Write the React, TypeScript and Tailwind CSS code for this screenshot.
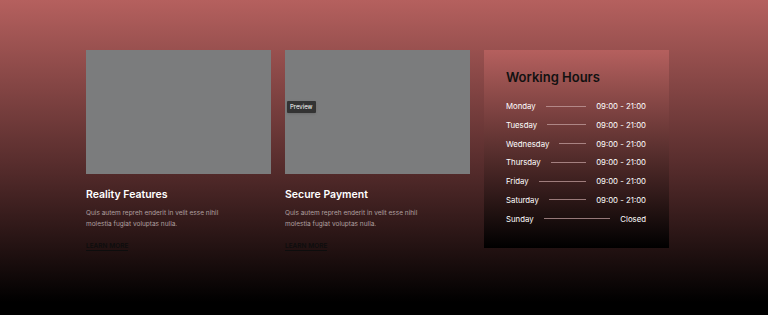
const features = [
  { title: "Reality Features", preview: false },
  { title: "Secure Payment", preview: true },
];

const hours = [
  { day: "Monday", time: "09:00 - 21:00" },
  { day: "Tuesday", time: "09:00 - 21:00" },
  { day: "Wednesday", time: "09:00 - 21:00" },
  { day: "Thursday", time: "09:00 - 21:00" },
  { day: "Friday", time: "09:00 - 21:00" },
  { day: "Saturday", time: "09:00 - 21:00" },
  { day: "Sunday", time: "Closed" },
];

export default function App() {
  return (
    <div
      className="w-[768px] h-[315px] bg-linear-to-b/srgb from-[#b5605e] via-[#522a2a] via-[55%] to-black to-[96%] pt-[50px] pl-[86px]"
      style={{ fontFamily: "Inter, 'Noto Sans', sans-serif" }}
    >
      <div className="flex gap-[14px]">
        {features.map((f) => (
          <div key={f.title} className="w-[185px]">
            <div className="relative h-[124px] bg-[#7b7c7d]">
              {f.preview && (
                <span className="absolute left-[2px] top-[51px] bg-[#333] text-white text-[6px] leading-none px-[3px] py-[3px] rounded-[1px] shadow">
                  Preview
                </span>
              )}
            </div>
            <h3 className="mt-[16px] text-[10.5px] font-semibold text-white leading-none">{f.title}</h3>
            <p className="mt-[7px] text-[6.5px] leading-[11px] text-[#b0a0a0] w-[150px]">
              Quis autem repreh enderit in velit esse nihil molestia fugiat voluptas nulla.
            </p>
            <a className="inline-block mt-[8px] text-[6.5px] font-semibold text-[#0d0d0d] uppercase border-b border-[#0d0d0d] pb-[1px] leading-none">
              Learn More
            </a>
          </div>
        ))}
        <div className="w-[185px] h-[198px] bg-linear-to-b/srgb from-[#b5605e] to-black pl-[22px] pr-[23px] pt-[21px]">
          <h3 className="text-[13px] font-semibold text-[#111] leading-none">Working Hours</h3>
          <ul className="mt-[17px] flex flex-col gap-[8.8px]">
            {hours.map((h) => (
              <li key={h.day} className="flex items-center text-[7.8px] text-white leading-[10px]">
                <span>{h.day}</span>
                <span className="flex-1 mx-[10px] h-px bg-[#c9a5a5]/70" />
                <span>{h.time}</span>
              </li>
            ))}
          </ul>
        </div>
      </div>
    </div>
  );
}
